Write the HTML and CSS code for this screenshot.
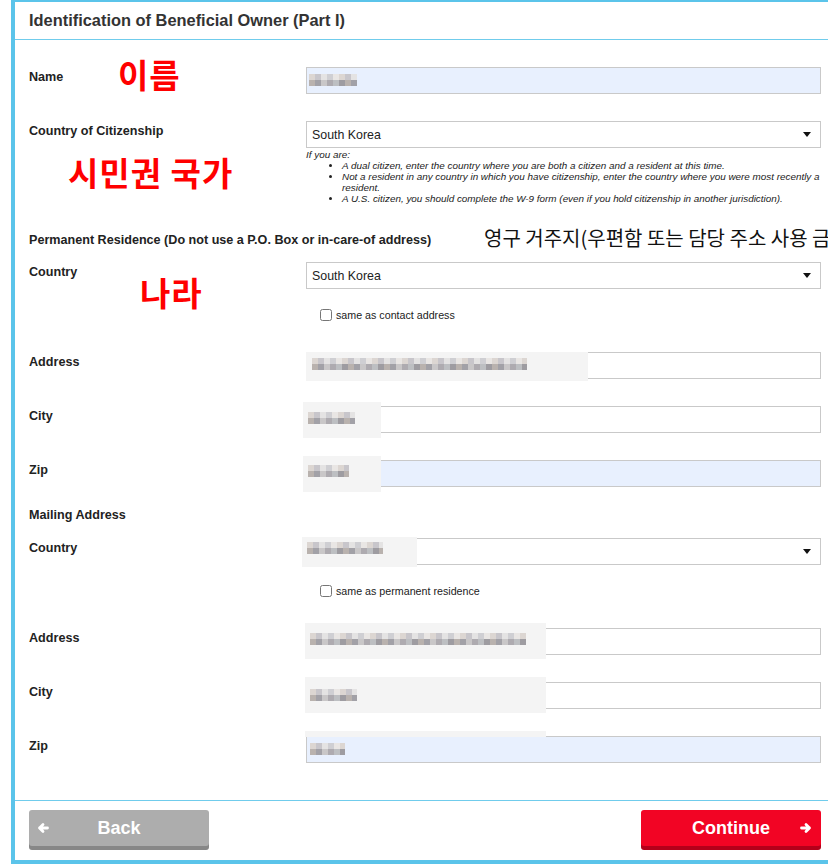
FILE: index.html
```html
<!DOCTYPE html>
<html lang="en">
<head>
    <meta charset="UTF-8">
    <meta name="viewport" content="width=device-width, initial-scale=1.0">
    <title>Identification of Beneficial Owner</title>
    <link rel="stylesheet" href="styles.css">
</head>
<body>
    <div class="panel">
        <div class="panel-header">
            <h1>Identification of Beneficial Owner (Part I)</h1>
        </div>
        <form class="panel-body">
            <div class="field">
                <label class="field-label">Name</label>
                <div class="field-control">
                    <input type="text" class="text-input autofill">
                    <span class="redact redact-name"><i></i></span>
                </div>
                <span class="note note-name">이름</span>
            </div>

            <div class="field field-tall">
                <label class="field-label">Country of Citizenship</label>
                <div class="field-control">
                    <div class="select-wrap">
                        <select class="select-input">
                            <option>South Korea</option>
                        </select>
                        <span class="caret"></span>
                    </div>
                    <div class="help">
                        If you are:
                        <ul>
                            <li>A dual citizen, enter the country where you are both a citizen and a resident at this time.</li>
                            <li>Not a resident in any country in which you have citizenship, enter the country where you were most recently a resident.</li>
                            <li>A U.S. citizen, you should complete the W-9 form (even if you hold citizenship in another jurisdiction).</li>
                        </ul>
                    </div>
                </div>
                <span class="note note-citizen">시민권 국가</span>
            </div>

            <div class="section-title section-first">
                Permanent Residence (Do not use a P.O. Box or in-care-of address)
                <span class="note-plain">영구 거주지(우편함 또는 담당 주소 사용 금지)</span>
            </div>

            <div class="field field-check">
                <label class="field-label">Country</label>
                <div class="field-control">
                    <div class="select-wrap">
                        <select class="select-input">
                            <option>South Korea</option>
                        </select>
                        <span class="caret"></span>
                    </div>
                    <label class="check"><input type="checkbox"> same as contact address</label>
                </div>
                <span class="note note-country">나라</span>
            </div>

            <div class="field">
                <label class="field-label">Address</label>
                <div class="field-control">
                    <input type="text" class="text-input">
                    <span class="redact redact-address"><i></i></span>
                </div>
            </div>

            <div class="field">
                <label class="field-label">City</label>
                <div class="field-control">
                    <input type="text" class="text-input">
                    <span class="redact redact-city"><i></i></span>
                </div>
            </div>

            <div class="field field-end">
                <label class="field-label">Zip</label>
                <div class="field-control">
                    <input type="text" class="text-input autofill">
                    <span class="redact redact-zip"><i></i></span>
                </div>
            </div>

            <div class="section-title">Mailing Address</div>

            <div class="field field-check">
                <label class="field-label">Country</label>
                <div class="field-control">
                    <div class="select-wrap">
                        <select class="select-input">
                            <option></option>
                        </select>
                        <span class="caret"></span>
                        <span class="redact redact-country"><i></i></span>
                    </div>
                    <label class="check"><input type="checkbox"> same as permanent residence</label>
                </div>
            </div>

            <div class="field">
                <label class="field-label">Address</label>
                <div class="field-control">
                    <input type="text" class="text-input">
                    <span class="redact redact-address2"><i></i></span>
                </div>
            </div>

            <div class="field">
                <label class="field-label">City</label>
                <div class="field-control">
                    <input type="text" class="text-input">
                    <span class="redact redact-city2"><i></i></span>
                </div>
            </div>

            <div class="field">
                <label class="field-label">Zip</label>
                <div class="field-control">
                    <span class="redact redact-zip2-top"></span>
                    <input type="text" class="text-input autofill">
                    <span class="redact redact-zip2"><i></i></span>
                </div>
            </div>
        </form>
        <div class="panel-footer">
            <button type="button" class="btn btn-back">
                <svg class="btn-arrow arrow-left" width="12" height="12" viewBox="0 0 12 12">
                    <path d="M10.5 6H2.5M6 2.5L2.5 6 6 9.5" fill="none" stroke="#fff" stroke-width="2.8" stroke-linecap="round" stroke-linejoin="round"/>
                </svg>
                Back
            </button>
            <button type="button" class="btn btn-continue">
                Continue
                <svg class="btn-arrow arrow-right" width="12" height="12" viewBox="0 0 12 12">
                    <path d="M1.5 6h8M6 2.5L9.5 6 6 9.5" fill="none" stroke="#fff" stroke-width="2.8" stroke-linecap="round" stroke-linejoin="round"/>
                </svg>
            </button>
        </div>
    </div>
</body>
</html>
```

FILE: styles.css
```css
:root {
    --frame-color: #5bc4ea;
    --line-color: #70ccec;
    --input-border: #c9c9c9;
    --autofill-bg: #e8f0fe;
    --text-color: #222;
}
html, body {
    margin: 0;
    padding: 0;
    overflow: hidden;
    background-color: #fff;
}
body {
    font-family: "Liberation Sans", Arial, sans-serif;
    color: var(--text-color);
    height: 865px;
}
.panel {
    margin-left: 11px;
    width: 828px;
    box-sizing: border-box;
    border: 4px solid var(--frame-color);
    border-top-width: 2px;
    background-color: #fff;
}
.panel-header {
    height: 37px;
    padding: 0 14px;
    display: flex;
    align-items: center;
    border-bottom: 1px solid var(--line-color);
}
.panel-header h1 {
    margin: 0;
    font-size: 16.4px;
    font-weight: bold;
    color: #333;
}
.panel-body {
    padding: 27px 14px 37px;
    margin: 0;
}
.field {
    display: grid;
    grid-template-columns: 277px 1fr;
    margin-bottom: 27px;
    position: relative;
}
.field:last-child {
    margin-bottom: 0;
}
.field-tall {
    margin-bottom: 29px;
}
.field-check {
    margin-bottom: 30px;
}
.field-end {
    margin-bottom: 21px;
}
.field-label {
    font-size: 12.6px;
    font-weight: bold;
    line-height: 14px;
    padding-top: 3px;
}
.field-control {
    position: relative;
}
.text-input,
.select-input {
    display: block;
    width: 100%;
    height: 27px;
    box-sizing: border-box;
    margin: 0;
    padding: 0 5px;
    border: 1px solid var(--input-border);
    border-radius: 0;
    background-color: #fff;
    font-family: "Liberation Sans", Arial, sans-serif;
    font-size: 12.4px;
    color: var(--text-color);
    outline: none;
}
.select-input {
    -webkit-appearance: none;
    appearance: none;
}
.autofill {
    background-color: var(--autofill-bg);
}
.select-wrap {
    position: relative;
}
.caret {
    position: absolute;
    right: 10px;
    top: 11px;
    width: 0;
    height: 0;
    border-left: 4.5px solid transparent;
    border-right: 4.5px solid transparent;
    border-top: 5px solid #111;
}
.help {
    margin-top: 1px;
    font-size: 9.9px;
    font-style: italic;
    line-height: 11px;
}
.help ul {
    margin: 0;
    padding-left: 36px;
}
.section-title {
    position: relative;
    font-size: 12.6px;
    font-weight: bold;
    line-height: 14px;
    margin-bottom: 16px;
}
.section-first {
    margin-bottom: 15px;
}
.check {
    display: flex;
    align-items: center;
    gap: 4px;
    height: 14px;
    margin-top: 19px;
    padding-left: 14px;
    font-size: 10.7px;
}
.check input {
    margin: 0;
    width: 12px;
    height: 12px;
}

/* red notes written over the screenshot */
.note {
    position: absolute;
    color: #f00;
    font-family: "Noto Sans CJK KR", sans-serif;
    font-weight: bold;
    font-size: 33px;
    line-height: 1;
    letter-spacing: 1px;
    white-space: nowrap;
}
.note-name {
    left: 89px;
    top: -9px;
}
.note-citizen {
    left: 39px;
    top: 35px;
}
.note-country {
    left: 111px;
    top: 14px;
}
.note-plain {
    position: absolute;
    left: 455px;
    top: -7px;
    font-family: "Noto Sans CJK KR", sans-serif;
    font-weight: normal;
    font-size: 20px;
    line-height: 1.2;
    color: #111;
    white-space: nowrap;
}

/* pixelated blocks hiding personal data */
.redact {
    position: absolute;
    background-color: #f4f4f4;
}
.redact i {
    position: absolute;
    display: block;
    background-image:
        repeating-linear-gradient(90deg, #dcd6d2 0 6px, #c8c6cb 6px 12px, #e4e3e3 12px 18px, #cfcfd3 18px 24px, #e9e6e4 24px 30px),
        repeating-linear-gradient(90deg, #b9b2ae 0 6px, #a2a1a7 6px 12px, #c9c7c8 12px 18px, #aeabb0 18px 24px, #bdbfc2 24px 30px, #9e9ca1 30px 36px);
    background-size: 100% 50%, 100% 50%;
    background-position: top left, bottom left;
    background-repeat: no-repeat;
}
.redact-name {
    left: 1px;
    top: 1px;
    width: 52px;
    height: 25px;
    background-color: var(--autofill-bg);
}
.redact-name i {
    left: 2px;
    top: 6px;
    width: 48px;
    height: 12px;
}
.redact-address {
    left: 0;
    top: 0;
    width: 282px;
    height: 29px;
}
.redact-address i {
    left: 6px;
    top: 6px;
    width: 215px;
    height: 12px;
}
.redact-city {
    left: -3px;
    top: -4px;
    width: 78px;
    height: 36px;
}
.redact-city i {
    left: 5px;
    top: 10px;
    width: 47px;
    height: 12px;
}
.redact-zip {
    left: -3px;
    top: -4px;
    width: 78px;
    height: 36px;
}
.redact-zip i {
    left: 5px;
    top: 9px;
    width: 41px;
    height: 12px;
}
.redact-country {
    left: -4px;
    top: -1px;
    width: 115px;
    height: 30px;
}
.redact-country i {
    left: 5px;
    top: 5px;
    width: 76px;
    height: 12px;
}
.redact-address2,
.redact-city2 {
    left: -1px;
    top: -5px;
    width: 241px;
    height: 36px;
}
.redact-address2 i {
    left: 5px;
    top: 10px;
    width: 216px;
    height: 12px;
}
.redact-city2 i {
    left: 5px;
    top: 12px;
    width: 47px;
    height: 12px;
}
.redact-zip2-top {
    left: -1px;
    top: -5px;
    width: 241px;
    height: 6px;
}
.redact-zip2 {
    left: 1px;
    top: 1px;
    width: 40px;
    height: 25px;
    background-color: var(--autofill-bg);
}
.redact-zip2 i {
    left: 3px;
    top: 6px;
    width: 35px;
    height: 12px;
}

.panel-footer {
    display: flex;
    justify-content: space-between;
    padding: 9px 14px 10px;
    border-top: 1px solid var(--line-color);
}
.btn {
    position: relative;
    width: 180px;
    height: 36px;
    margin-bottom: 4px;
    border: none;
    border-radius: 3px;
    color: #fff;
    font-family: "Liberation Sans", Arial, sans-serif;
    font-size: 18px;
    font-weight: bold;
    cursor: pointer;
}
.btn-back {
    background-color: #adadad;
    box-shadow: 0 4px 0 #878787;
}
.btn-continue {
    background-color: #f20424;
    box-shadow: 0 4px 0 #b4001a;
}
.btn-arrow {
    position: absolute;
    top: 12px;
}
.arrow-left {
    left: 8px;
}
.arrow-right {
    right: 9px;
}
```
